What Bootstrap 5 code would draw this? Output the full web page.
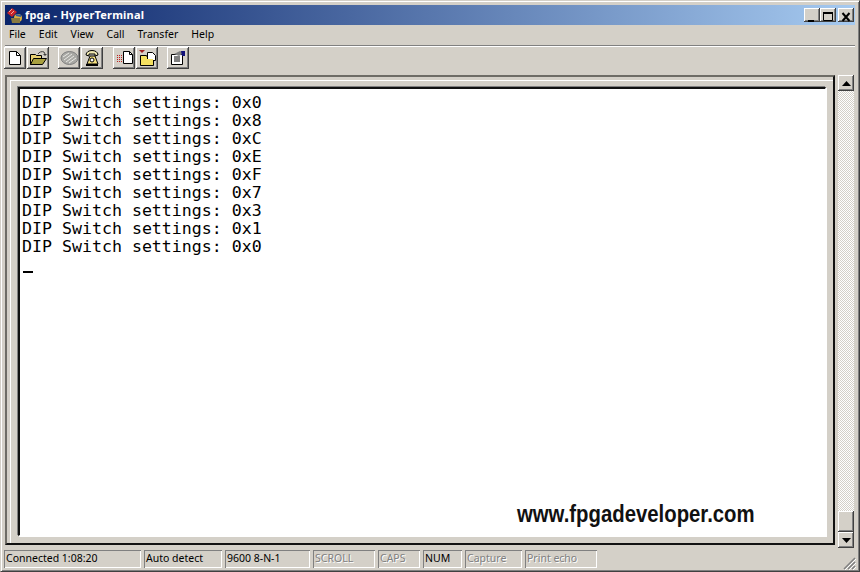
<!DOCTYPE html>
<html lang="en">
<head>
<meta charset="utf-8">
<title>fpga - HyperTerminal</title>
<link href="https://cdn.jsdelivr.net/npm/bootstrap@5.3.0/dist/css/bootstrap.min.css" rel="stylesheet">
<style>
html,body{margin:0;height:572px;overflow:hidden;background:#d4d0c8}
.win{width:860px;height:572px;background:#d4d0c8;padding:4px 4px 3px 4px;border-top:1px solid #d4d0c8;border-left:1px solid #d4d0c8;border-right:1px solid #404040;border-bottom:1px solid #404040;box-shadow:inset 1px 1px 0 #fff,inset -1px -1px 0 #808080;font-family:"Noto Sans","DejaVu Sans",sans-serif;font-size:10.5px;color:#000}
.ttl{height:20px;flex:none;padding:0 1px 0 1px;background:linear-gradient(90deg,#0a246a,#a6caf0);color:#fff;font-weight:700;font-size:11px}
.ttl-name{margin-left:2px;letter-spacing:.2px}
.capbtn{width:16px;height:14px;background:#d4d0c8;box-shadow:inset -1px -1px 0 #404040,inset 1px 1px 0 #fff,inset -2px -2px 0 #808080;display:block}
.capgap{margin-left:2px}
.menu-bar{height:21px;flex:none;padding-left:0;border-bottom:1px solid #808080;box-shadow:0 1px 0 #fff}
.menu-it{padding:0 4px;margin-right:5px}
.tools{height:29px;flex:none;padding-top:1px;margin-left:-1px}
.tbtn{width:22px;height:22px;background:#d4d0c8;box-shadow:inset -1px -1px 0 #404040,inset 1px 1px 0 #fff,inset -2px -2px 0 #808080;margin-right:1px}
.tsep{width:8px}
.tsep-w{width:9px}
.client{height:470px;flex:none;margin-right:-1px}
.frame{width:830px;flex:none;border-top:2px solid #6e6c66;border-left:2px solid #6e6c66;border-right:2px solid #111;border-bottom:2px solid #111;box-shadow:inset 3px 3px 0 #d4d0c8,inset 4px 4px 0 #fff;padding:10px 7px 7px 11px;position:relative}
.screen{background:#fff;height:100%;border-top:2px solid #111;border-left:2px solid #111;border-right:1px solid #fff;border-bottom:1px solid #fff;box-shadow:1px 1px 0 #fff,-1px -1px 0 #808080;padding:5px 0 0 2px;position:relative}
.tline{font-family:"DejaVu Sans Mono","Liberation Mono",monospace;font-size:16.6px;line-height:18px;white-space:pre;color:#000;height:18px}
.cursor{width:10px;height:2px;background:#000;margin-top:15px;margin-left:1px}
.mark-url{position:absolute;left:497px;top:411px;font-family:"Liberation Sans",sans-serif;font-weight:700;font-size:24px;line-height:28px;color:#111;white-space:nowrap;transform:scaleX(.847);transform-origin:left center}
.sbar{width:16px;margin-left:3px;margin-bottom:-3px}
.sb-btn{height:16px;width:16px;flex:none;background:#d4d0c8;box-shadow:inset -1px -1px 0 #404040,inset 1px 1px 0 #fff,inset -2px -2px 0 #808080}
.sb-track{background-color:#fff;background-image:repeating-conic-gradient(#d4d0c8 0 25%,#fff 0 50%);background-size:2px 2px}
.sb-thumb{height:21px;width:16px;background:#d4d0c8;box-shadow:inset -1px -1px 0 #404040,inset 1px 1px 0 #fff,inset -2px -2px 0 #808080}
.sts{height:21px;flex:none;margin-top:5px;margin-left:-1px;position:relative}
.pane{height:18px;line-height:16px;padding-left:2px;box-shadow:inset 1px 1px 0 #808080,inset -1px -1px 0 #fff;white-space:nowrap;overflow:hidden;flex:none}
.off{color:#808080;text-shadow:1px 1px 0 #fff}
.grip{position:absolute;right:-1px;bottom:1px}
.stat-a{width:137px;margin-right:3px}.stat-b{width:78px;margin-right:3px}.stat-c{width:85px;margin-right:3px}.stat-d{width:62px;margin-right:3px}.stat-e{width:42px;margin-right:3px}.stat-f{width:39px;margin-right:3px}.stat-g{width:57px;margin-right:3px}.stat-h{width:72px}
</style>
</head>
<body>
<div class="win d-flex flex-column">
  <div class="ttl d-flex align-items-center">
    <svg width="17" height="17" viewBox="0 0 17 17"><path d="M1 6 6 1l5 4-5 5z" fill="#c8242a"/><path d="M3 5l3-3M5 7l3-3" stroke="#f6b0a0"/><circle cx="12" cy="11" r="4" fill="#d8b040"/><path d="M5 11h9v5H6z" fill="#8a7a40"/><path d="M10 8l5 1" stroke="#3060a0" stroke-width="2"/></svg>
    <span class="ttl-name flex-grow-1">fpga - HyperTerminal</span>
    <span class="capbtn"><svg width="16" height="14" viewBox="0 0 16 14"><path d="M4 10h6v2H4z" fill="#000"/></svg></span>
    <span class="capbtn"><svg width="16" height="14" viewBox="0 0 16 14"><path d="M3.500 3.500h9v7h-9z" fill="none" stroke="#000"/><path d="M3 2h10v2H3z" fill="#000"/></svg></span>
    <span class="capbtn capgap"><svg width="16" height="14" viewBox="0 0 16 14"><path d="M4.500 3l7 8M11.500 3l-7 8" stroke="#000" stroke-width="2"/></svg></span>
  </div>
  <div class="menu-bar d-flex align-items-center">
    <span class="menu-it">File</span><span class="menu-it">Edit</span><span class="menu-it">View</span><span class="menu-it">Call</span><span class="menu-it">Transfer</span><span class="menu-it">Help</span>
  </div>
  <div class="tools d-flex">
    <span class="tbtn d-flex align-items-center justify-content-center"><svg width="16" height="16" viewBox="0 0 16 16"><path d="M2.500 1.500h7l4 4v9h-11z" fill="#fff" stroke="#000"/><path d="M9.500 1.500v4h4" fill="none" stroke="#000"/></svg></span>
    <span class="tbtn d-flex align-items-center justify-content-center"><svg width="19" height="16" viewBox="0 0 19 16"><path d="M1.500 4.500h5l1 1h5v9h-11z" fill="#e8d070" stroke="#000"/><path d="M1.500 14.500l3-6h13l-4 6z" fill="#a8a040" stroke="#000"/><path d="M9 4c1-2 4-3 6-2l1 2" fill="none" stroke="#404040"/><path d="M14 4h4l-2 2z" fill="#404040"/></svg></span>
    <span class="tsep"></span>
    <span class="tbtn d-flex align-items-center justify-content-center"><svg width="19" height="16" viewBox="0 0 19 16"><ellipse cx="9.500" cy="8" rx="8.500" ry="6.500" fill="#a8a8a4" stroke="#808080"/><path d="M4 10l8-6M6 12l8-6M3 7l6-4M9 13l7-5" stroke="#e8e8e4"/></svg></span>
    <span class="tbtn d-flex align-items-center justify-content-center"><svg width="18" height="18" viewBox="0 0 18 18"><path d="M3 6c0-6 12-6 12 0l-3 1V5H6v2z" fill="#f0e8b0" stroke="#000"/><path d="M7 7l-3 8h11l-3-8z" fill="#f4e080" stroke="#000"/><circle cx="9" cy="11" r="2" fill="#fff" stroke="#000"/><path d="M3 16h12" stroke="#000" stroke-width="2"/></svg></span>
    <span class="tsep-w"></span>
    <span class="tbtn d-flex align-items-center justify-content-center"><svg width="19" height="16" viewBox="0 0 19 16"><path d="M2 5h1v1H2zM4 5h1v1H4zM6 5h1v1H6zM2 7h1v1H2zM4 7h1v1H4zM6 7h1v1H6zM2 9h1v1H2zM4 9h1v1H4zM6 9h1v1H6zM2 11h1v1H2zM4 11h1v1H4zM6 11h1v1H6z" fill="#c02020"/><path d="M8.500 1.500h6l3 3v9h-9z" fill="#fff" stroke="#000"/><path d="M14.500 1.500v3h3" fill="none" stroke="#000"/></svg></span>
    <span class="tbtn d-flex align-items-center justify-content-center"><svg width="19" height="18" viewBox="0 0 19 18"><path d="M1 1h6l-3 3z" fill="#a02020"/><path d="M2.500 6.500h6l1 2h6v8h-13z" fill="#f4e060" stroke="#000"/><path d="M9.500 3.500h5l3 3v5h-8z" fill="#fff" stroke="#000"/><path d="M4 10h11v6H4z" fill="#f4e060"/></svg></span>
    <span class="tsep"></span>
    <span class="tbtn d-flex align-items-center justify-content-center"><svg width="18" height="16" viewBox="0 0 18 16"><path d="M2.500 4.500h11v10h-11z" fill="#fff" stroke="#000"/><path d="M5 7h6M5 9h6M5 11h6" stroke="#000"/><path d="M5 4l6-3 4 2-5 3z" fill="#808080"/><path d="M12 1h4v5h-3z" fill="#10107a"/></svg></span>
  </div>
  <div class="client d-flex">
    <div class="frame">
      <div class="screen">
        <div class="tline">DIP Switch settings: 0x0</div>
        <div class="tline">DIP Switch settings: 0x8</div>
        <div class="tline">DIP Switch settings: 0xC</div>
        <div class="tline">DIP Switch settings: 0xE</div>
        <div class="tline">DIP Switch settings: 0xF</div>
        <div class="tline">DIP Switch settings: 0x7</div>
        <div class="tline">DIP Switch settings: 0x3</div>
        <div class="tline">DIP Switch settings: 0x1</div>
        <div class="tline">DIP Switch settings: 0x0</div>
        <div class="cursor"></div>
        <div class="mark-url">www.fpgadeveloper.com</div>
      </div>
    </div>
    <div class="sbar d-flex flex-column">
      <span class="sb-btn d-flex align-items-center justify-content-center"><svg width="9" height="5" viewBox="0 0 9 5"><path d="M4.500 0 9 5H0z" fill="#000"/></svg></span>
      <div class="sb-track flex-grow-1"></div>
      <div class="sb-thumb"></div>
      <span class="sb-btn d-flex align-items-center justify-content-center"><svg width="9" height="5" viewBox="0 0 9 5"><path d="M0 0h9L4.500 5z" fill="#000"/></svg></span>
    </div>
  </div>
  <div class="sts d-flex">
    <div class="pane stat-a">Connected 1:08:20</div>
    <div class="pane stat-b">Auto detect</div>
    <div class="pane stat-c">9600 8-N-1</div>
    <div class="pane stat-d off">SCROLL</div>
    <div class="pane stat-e off">CAPS</div>
    <div class="pane stat-f">NUM</div>
    <div class="pane stat-g off">Capture</div>
    <div class="pane stat-h off">Print echo</div>
    <svg class="grip" width="13" height="13" viewBox="0 0 13 13"><path d="M12 1 1 12M12 5 5 12M12 9l-3 3" stroke="#808080" stroke-width="1.500"/><path d="M13 2 2 13M13 6 6 13M13 10l-3 3" stroke="#fff"/></svg>
  </div>
</div>
</body>
</html>
